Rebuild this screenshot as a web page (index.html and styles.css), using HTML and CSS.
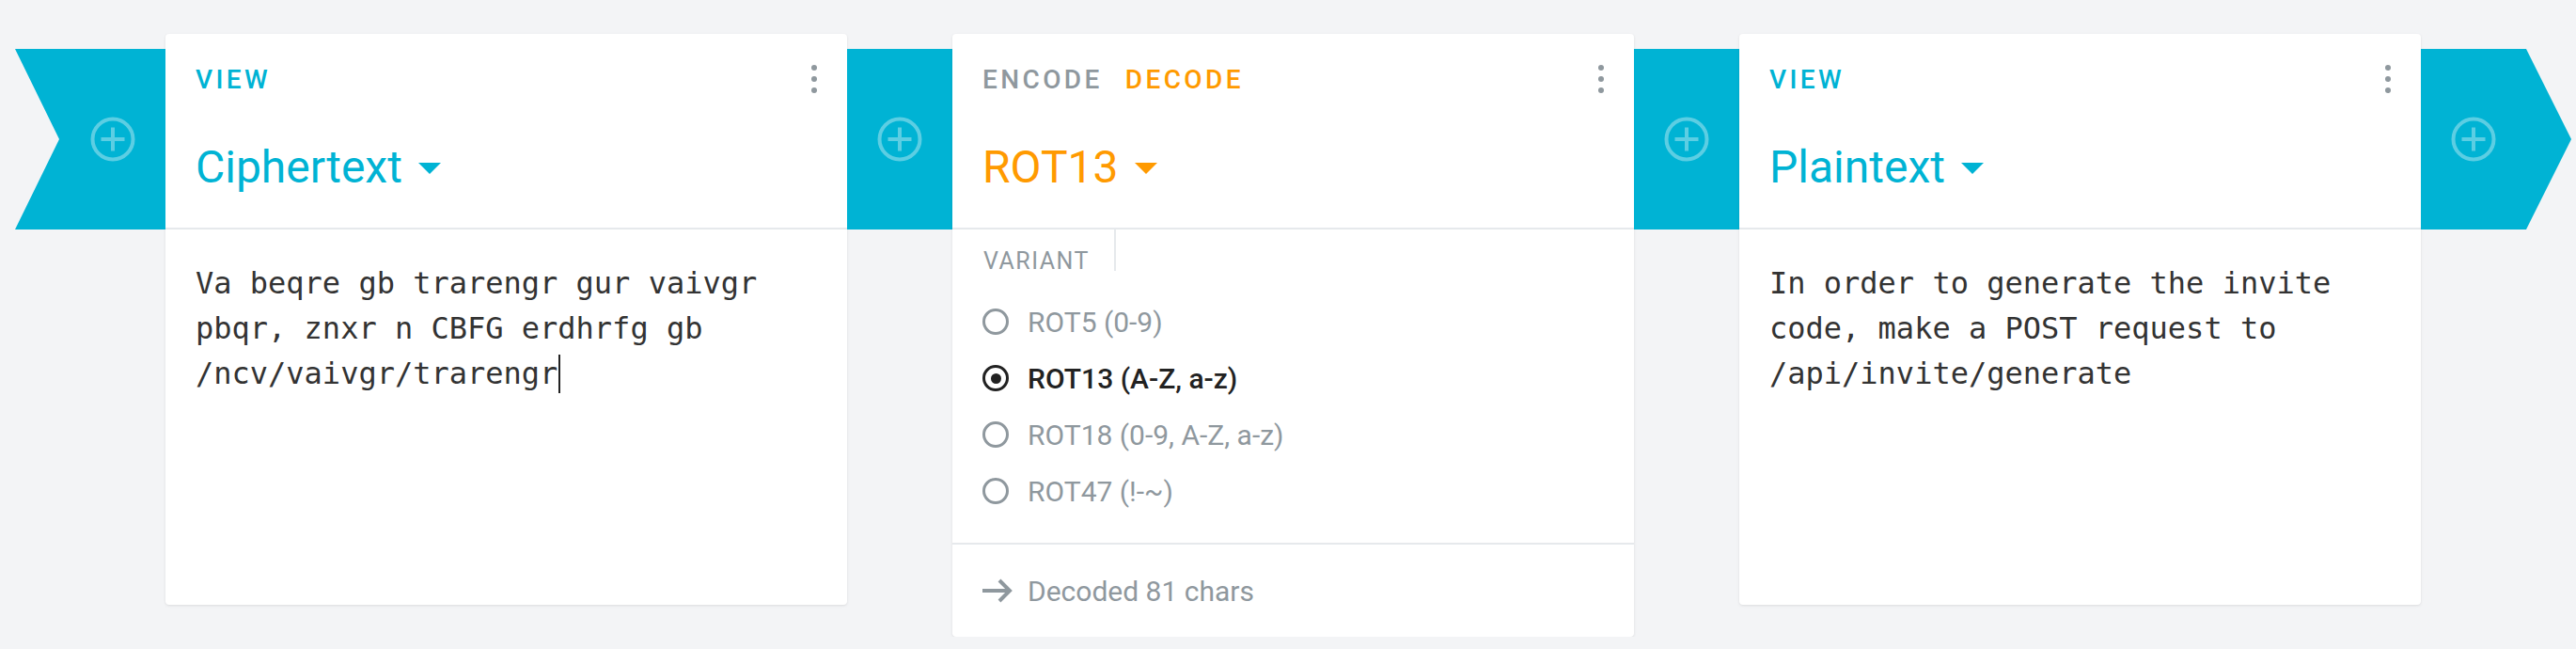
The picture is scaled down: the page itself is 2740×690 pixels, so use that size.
FILE: index.html
```html
<!DOCTYPE html>
<html lang="en">
<head>
<meta charset="utf-8">
<title>Cryptii pipeline</title>
<link rel="stylesheet" href="styles.css">
</head>
<body>
<div class="pipeline">
  <div class="cap cap-start">
    <svg class="add" viewBox="0 0 48 48"><circle cx="24" cy="24" r="21.5"/><path d="M24 11.5V36.5M11.5 24H36.5"/></svg>
  </div>

  <section class="brick">
    <header class="brick-head">
      <div class="head-row">
        <div class="modes"><span class="mode mode-view">VIEW</span></div>
        <div class="menu"><i></i><i></i><i></i></div>
      </div>
      <div class="title title-view">Ciphertext<span class="caret"></span></div>
    </header>
    <div class="text-body">Va beqre gb trarengr gur vaivgr pbqr, znxr n CBFG erdhrfg gb /ncv/vaivgr/trarengr<span class="cursor"></span></div>
  </section>

  <div class="link">
    <svg class="add" viewBox="0 0 48 48"><circle cx="24" cy="24" r="21.5"/><path d="M24 11.5V36.5M11.5 24H36.5"/></svg>
  </div>

  <section class="brick">
    <header class="brick-head">
      <div class="head-row">
        <div class="modes"><span class="mode">ENCODE</span><span class="mode mode-active">DECODE</span></div>
        <div class="menu"><i></i><i></i><i></i></div>
      </div>
      <div class="title title-encoder">ROT13<span class="caret"></span></div>
    </header>
    <div class="options">
      <div class="field-label">VARIANT</div>
      <ul class="radios">
        <li class="radio"><span class="radio-mark"></span>ROT5 (0-9)</li>
        <li class="radio selected"><span class="radio-mark"></span>ROT13 (A-Z, a-z)</li>
        <li class="radio"><span class="radio-mark"></span>ROT18 (0-9, A-Z, a-z)</li>
        <li class="radio"><span class="radio-mark"></span>ROT47 (!-~)</li>
      </ul>
    </div>
    <div class="brick-foot">
      <svg class="arrow" viewBox="0 0 32 26"><path d="M0 13H29M18 2L29 13L18 24"/></svg>
      <span>Decoded 81 chars</span>
    </div>
  </section>

  <div class="link">
    <svg class="add" viewBox="0 0 48 48"><circle cx="24" cy="24" r="21.5"/><path d="M24 11.5V36.5M11.5 24H36.5"/></svg>
  </div>

  <section class="brick">
    <header class="brick-head">
      <div class="head-row">
        <div class="modes"><span class="mode mode-view">VIEW</span></div>
        <div class="menu"><i></i><i></i><i></i></div>
      </div>
      <div class="title title-view">Plaintext<span class="caret"></span></div>
    </header>
    <div class="text-body">In order to generate the invite code, make a POST request to /api/invite/generate</div>
  </section>

  <div class="cap cap-end">
    <svg class="add" viewBox="0 0 48 48"><circle cx="24" cy="24" r="21.5"/><path d="M24 11.5V36.5M11.5 24H36.5"/></svg>
  </div>
</div>
</body>
</html>
```

FILE: styles.css
```css
html, body {
  margin: 0;
  padding: 0;
}

body {
  background: #f3f4f6;
  font-family: Roboto, "Noto Sans", sans-serif;
  color: #222;
}

.pipeline {
  display: flex;
  align-items: flex-start;
  padding: 36px 0 0 16px;
}

.cap,
.link {
  flex: none;
  height: 192px;
  margin-top: 16px;
  background: #00b3d4;
  display: flex;
  align-items: center;
  justify-content: center;
  box-sizing: border-box;
}

.cap {
  width: 160px;
}

.cap-start {
  padding-left: 48px;
  clip-path: polygon(0 0, 100% 0, 100% 100%, 0 100%, 47px 50%);
}

.cap-end {
  padding-right: 48px;
  clip-path: polygon(0 0, 112px 0, 100% 50%, 112px 100%, 0 100%);
}

.link {
  width: 112px;
}

.add {
  width: 48px;
  height: 48px;
  display: block;
  fill: none;
  stroke: rgba(255, 255, 255, 0.36);
  stroke-width: 4;
}

.brick {
  flex: none;
  width: 725px;
  background: #fff;
  border-radius: 4px;
  box-shadow: 0 1px 3px rgba(0, 0, 0, 0.1);
}

.brick-head {
  box-sizing: border-box;
  height: 208px;
  padding: 33px 32px 0;
  border-bottom: 2px solid #e6e9ec;
}

.head-row {
  display: flex;
  align-items: center;
  justify-content: space-between;
  height: 32px;
}

.modes {
  display: flex;
  gap: 24px;
}

.mode {
  font-size: 28px;
  line-height: 32px;
  font-weight: 500;
  letter-spacing: 3.4px;
  color: #8f989e;
}

.mode-view {
  color: #00b3d4;
}

.mode-active {
  color: #ff9a00;
}

.menu {
  display: flex;
  flex-direction: column;
  gap: 6px;
  margin-top: -2px;
}

.menu i {
  display: block;
  width: 6px;
  height: 6px;
  border-radius: 50%;
  background: #8f989e;
}

.title {
  margin-top: 49px;
  display: flex;
  align-items: center;
  font-size: 48px;
  line-height: 56px;
  font-weight: 400;
}

.title-view {
  color: #00b3d4;
}

.title-encoder {
  color: #ff9a00;
}

.caret {
  width: 0;
  height: 0;
  border-left: 12px solid transparent;
  border-right: 12px solid transparent;
  border-top: 12px solid currentColor;
  margin-left: 17px;
  margin-top: 2px;
}

.text-body {
  box-sizing: border-box;
  height: 399px;
  padding: 33px 32px;
  font-family: "DejaVu Sans Mono", "Liberation Mono", monospace;
  font-size: 32px;
  line-height: 48px;
  color: #333;
}

.cursor {
  display: inline-block;
  width: 2px;
  height: 41px;
  margin-left: 1px;
  margin-right: -3px;
  background: #222;
  vertical-align: -10px;
}

.options {
  box-sizing: border-box;
  height: 333px;
  padding: 0 32px;
}

.field-label {
  display: inline-block;
  box-sizing: border-box;
  height: 44px;
  padding: 24px 26px 0 1px;
  border-right: 2px solid #e6e9ec;
  font-size: 25px;
  line-height: 20px;
  font-weight: 400;
  letter-spacing: 1.5px;
  color: #8f989e;
}

.radios {
  list-style: none;
  margin: 22px 0 0;
  padding: 0;
}

.radio {
  display: flex;
  align-items: center;
  height: 60px;
  font-size: 30px;
  color: #8f989e;
}

.radio-mark {
  flex: none;
  box-sizing: border-box;
  width: 28px;
  height: 28px;
  margin-right: 20px;
  border: 3px solid currentColor;
  border-radius: 50%;
  display: flex;
  align-items: center;
  justify-content: center;
}

.radio.selected {
  color: #222;
  font-weight: 500;
}

.radio.selected .radio-mark::after {
  content: "";
  width: 11px;
  height: 11px;
  border-radius: 50%;
  background: currentColor;
}

.brick-foot {
  height: 98px;
  border-top: 2px solid #e6e9ec;
  display: flex;
  align-items: center;
  gap: 16px;
  padding: 0 32px;
  font-size: 30px;
  color: #8f989e;
}

.arrow {
  width: 32px;
  height: 26px;
  flex: none;
  fill: none;
  stroke: #8f989e;
  stroke-width: 4;
}
```
